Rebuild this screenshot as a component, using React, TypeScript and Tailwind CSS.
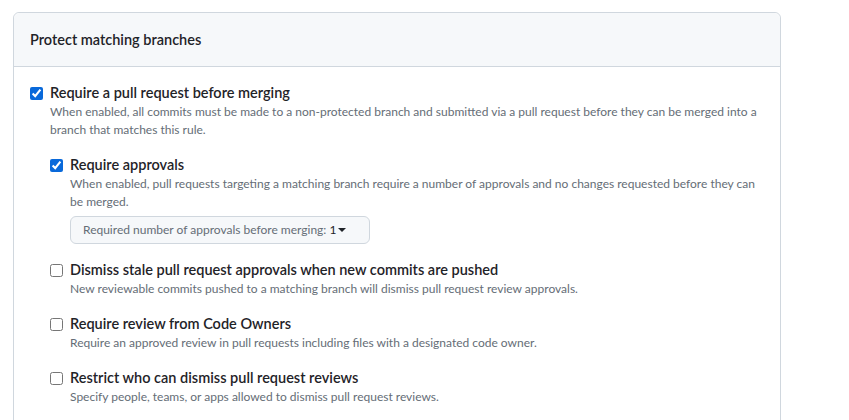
import React from 'react';

const font = { fontFamily: 'Lato, "Liberation Sans", sans-serif' };

type RuleProps = {
  title: string;
  desc: string;
  checked?: boolean;
  children?: React.ReactNode;
};

function Rule({ title, desc, checked, children }: RuleProps) {
  return (
    <div className="flex items-start">
      <input
        type="checkbox"
        defaultChecked={checked}
        className="mt-[4px] mr-[7px] h-[13px] w-[13px] shrink-0 accent-[#0969da]"
      />
      <div className="min-w-0">
        <div className="text-[14.5px] leading-[20px] font-semibold text-[#1f2328]">{title}</div>
        <p className="text-[12px] leading-[18px] text-[#656d76]">{desc}</p>
        {children}
      </div>
    </div>
  );
}

export default function App() {
  return (
    <div className="bg-white w-[849px] h-[420px] overflow-hidden pt-[12px] pl-[13px]" style={font}>
      <div className="w-[768px] border border-[#d0d7de] rounded-[6px]">
        <div className="h-[54px] bg-[#f6f8fa] border-b border-[#d0d7de] rounded-t-[6px] flex items-center px-[16px]">
          <h3 className="text-[14.5px] font-semibold text-[#1f2328]">Protect matching branches</h3>
        </div>
        <div className="pt-[16px] pl-[16px] pr-[18px] pb-[40px]">
          <Rule
            checked
            title="Require a pull request before merging"
            desc="When enabled, all commits must be made to a non-protected branch and submitted via a pull request before they can be merged into a branch that matches this rule."
          >
            <div className="mt-[16px] flex flex-col gap-[16px]">
              <Rule
                checked
                title="Require approvals"
                desc="When enabled, pull requests targeting a matching branch require a number of approvals and no changes requested before they can be merged."
              >
                <button className="mt-[5px] h-[28px] w-[300px] flex items-center whitespace-nowrap px-[12px] rounded-[6px] border border-[#d0d7de] bg-[#f6f8fa] text-[12px] text-[#656d76]">
                  Required number of approvals before merging:
                  <span className="ml-[3px] text-[#1f2328]">1</span>
                  <svg width="8" height="4" viewBox="0 0 8 4" className="ml-[2px]">
                    <path d="M0 0h8L4 4z" fill="#1f2328" />
                  </svg>
                </button>
              </Rule>
              <Rule
                title="Dismiss stale pull request approvals when new commits are pushed"
                desc="New reviewable commits pushed to a matching branch will dismiss pull request review approvals."
              />
              <Rule
                title="Require review from Code Owners"
                desc="Require an approved review in pull requests including files with a designated code owner."
              />
              <Rule
                title="Restrict who can dismiss pull request reviews"
                desc="Specify people, teams, or apps allowed to dismiss pull request reviews."
              />
            </div>
          </Rule>
        </div>
      </div>
    </div>
  );
}
